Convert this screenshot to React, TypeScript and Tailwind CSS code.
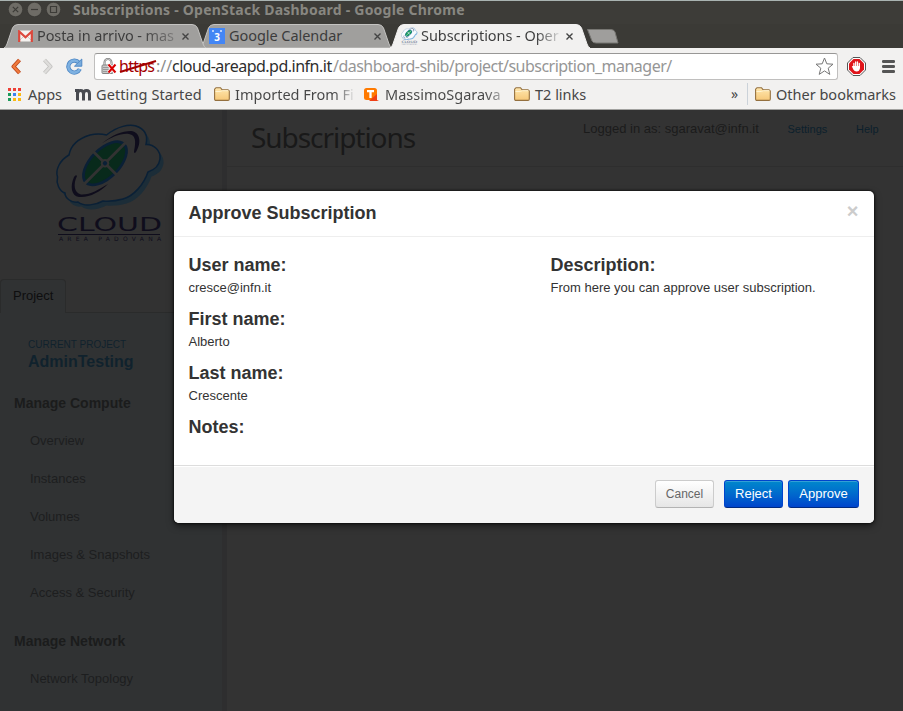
import type { ReactNode } from "react";

const UI = "font-['Noto_Sans','Open_Sans',sans-serif]";

function WindowButton({ children }: { children: ReactNode }) {
  return (
    <svg className="size-[15px] shrink-0" viewBox="0 0 15 15" fill="none" stroke="#3c3b37" strokeWidth="1.2">
      <circle cx="7.5" cy="7.5" r="7.2" fill="#6e6c66" stroke="#34332f" strokeWidth=".6" />
      {children}
    </svg>
  );
}

function TabShape({ width, fill, stroke }: { width: number; fill: string; stroke: string }) {
  const w = width;
  return (
    <svg className="absolute inset-0 size-full" viewBox={`0 0 ${w} 24`} preserveAspectRatio="none">
      <path
        d={`M0 24 Q2 23 3 20 L8.500 4 Q10 .5 14 .5 H${w - 14} Q${w - 10} .5 ${w - 8.5} 4 L${w - 3} 20 Q${w - 2} 23 ${w} 24 Z`}
        fill={fill}
        stroke={stroke}
      />
    </svg>
  );
}

function CloseX() {
  return (
    <svg className="relative size-[7px] shrink-0" viewBox="0 0 7 7" stroke="#444" strokeWidth="1.4">
      <path d="M.5 .5 6.500 6.500M6.500 .5 .5 6.500" />
    </svg>
  );
}

function Folder() {
  return (
    <svg className="h-[14px] w-4 shrink-0" viewBox="0 0 16 14">
      <defs>
        <linearGradient id="folder" x1="0" y1="0" x2="0" y2="1">
          <stop offset="0" stopColor="#ffe7b0" />
          <stop offset="1" stopColor="#f6c878" />
        </linearGradient>
      </defs>
      <path d="M.6 12V2.200L2 .7h4.500L8 2.700h6l1.300 1.200V12q0 1.400-1.300 1.400H2Q.6 13.400.6 12Z" fill="url(#folder)" stroke="#94703f" strokeWidth="1.100" />
      <path d="M1.500 4.500h5L8.200 3.700h6.200" fill="none" stroke="#fff3d0" />
    </svg>
  );
}

const CLOUD =
  "M50.500 13C62 4 73 2 80 4C89 7 92 14 90 22.500C98 22 105 29 104 37C103 44 98 48 92 50C88 62 78 74 67 77C60 79 53 79.500 47 79C40 83 28 85 22 80C15 81 9 76 9 71C3 69 0 61 1.500 55C-1 48 4 38 13 33C15 22 24 16 34 13C41 11.500 46 12 50.500 13Z";

function Logo({ className, fill, line, shade, green, ink }: {
  className: string; fill: string; line: string; shade: string; green: string; ink: string;
}) {
  return (
    <svg className={className} viewBox="0 0 110 120">
      <path d={CLOUD} transform="translate(3.500 4.500)" fill={shade} />
      <path d={CLOUD} fill={fill} stroke={line} strokeWidth="1.500" />
      <g transform="translate(49 41.300) rotate(-45)">
        <ellipse rx="28.500" ry="15.500" fill={line} />
        <ellipse rx="25.500" ry="12.800" fill={green} />
        <path d="M-30 0H30M0-17V17" stroke={fill} strokeWidth="2.800" />
        <circle r="4.200" fill={fill} />
        <circle r="2.200" fill={line} />
      </g>
      <path
        d="M46 21.300C56 13 66 9 75 9C84 10 86 20 80 30Q78 32 78 29.500C80 20 80 13 73 12C65 11 56 15 46 21.300ZM52 62C42 68 34 73 25 72.500C18 71 17 62 21 54Q20 52 18 55C14 64 15 74 23 75C33 76 44 70 52 62Z"
        fill={ink}
      />
      <g fill={ink} className="font-['DejaVu_Sans',sans-serif]">
        <text x="1" y="108.700" fontSize="20" textLength="105" lengthAdjust="spacingAndGlyphs">CLOUD</text>
        <path d="M2 112.500H104" stroke={ink} strokeWidth="1" />
        <text x="3" y="119" fontSize="6" textLength="102" lengthAdjust="spacing">AREA PADOVANA</text>
      </g>
    </svg>
  );
}

function Browser() {
  return (
    <header className={`h-[110px] ${UI} text-[15px] text-[#3c3c3c]`}>
      <div className="flex h-6 items-start gap-[4px] border-t border-[#a9b3b1] bg-[#3d3c38] pl-2">
        <div className="flex gap-[4px] pt-px">
          <WindowButton><path d="m4.800 4.800 5.400 5.400m0-5.400-5.400 5.400" /></WindowButton>
          <WindowButton><path d="M4 7.500h7" /></WindowButton>
          <WindowButton><path d="M4.500 4.500h6v6h-6z" /></WindowButton>
        </div>
        <span className="ml-[8px] whitespace-nowrap text-[14px] leading-[18px] font-bold tracking-[0.23px] text-[#888781]">
          Subscriptions - OpenStack Dashboard - Google Chrome
        </span>
      </div>

      <div className="flex h-6 bg-[#3b3a36] pl-[4px]">
        <div className="relative z-10 flex h-6 w-[202px] shrink-0 items-center pl-[14px]">
          <TabShape width={202} fill="#a09f9d" stroke="#c4c3c1" />
          <svg className="relative h-[12px] w-[15px] shrink-0" viewBox="0 0 15 12">
            <path d="M1 .5h13v11H1z" fill="#f5f2ef" />
            <path d="m1 11 5-5m8 5L9 6" stroke="#cfcac5" />
            <path d="M1.200 12V1.500l6.300 5.800 6.300-5.800V12" fill="none" stroke="#dc483c" strokeWidth="2.200" />
          </svg>
          <span className="relative ml-[4px] w-[141px] whitespace-nowrap bg-gradient-to-r from-[#3c3c3c] from-74% to-[#858483] bg-clip-text text-[14.5px] leading-[22px] pb-[2px] tracking-[-0.1px] text-transparent">Posta in arrivo - mas</span>
          <div className="ml-[4px] flex"><CloseX /></div>
        </div>
        <div className="relative -ml-[6px] flex h-6 w-[192px] shrink-0 items-center pl-[9px]">
          <TabShape width={192} fill="#a09f9d" stroke="#c4c3c1" />
          <div className="relative flex size-4 shrink-0 items-center justify-center bg-[#4386f5] text-[10px] font-bold text-white">
            <span className="pt-[3px]">3</span>
            <i className="absolute top-[2px] left-[3px] size-[2px] rounded-full bg-white/80" />
            <i className="absolute top-[2px] right-[3px] size-[2px] rounded-full bg-white/80" />
          </div>
          <span className="relative ml-[4px] w-[145px] whitespace-nowrap pb-[2px] text-[14.5px] leading-[22px] tracking-[-0.05px]">Google Calendar</span>
          <CloseX />
        </div>
        <div className="relative z-10 -ml-[2px] flex h-6 w-[200px] shrink-0 items-center pl-[11px]">
          <TabShape width={200} fill="#f2f1f0" stroke="#f2f1f0" />
          <Logo className="relative h-[18px] w-[17px] shrink-0" fill="#f8fbff" line="#2c6ea8" shade="#83bce6" green="#159a59" ink="#526582" />
          <span className="relative ml-[3px] w-[140px] whitespace-nowrap bg-gradient-to-r from-[#3c3c3c] from-82% to-[#e8e8e8] bg-clip-text pb-[2px] text-[14.5px] leading-[22px] tracking-[-0.05px] text-transparent">Subscriptions - Oper</span>
          <div className="ml-[5px] flex"><CloseX /></div>
        </div>
        <svg className="-ml-[3px] mt-[5px] h-[15px] w-[32px]" viewBox="0 0 32 15">
          <path d="M.5.5H24Q27 .5 28 3l3 11H9Q6 14 5 12Z" fill="#9f9e9c" stroke="#777672" />
        </svg>
      </div>

      <div className="flex h-9 items-center bg-[#f2f1f0] pl-[11px]">
        <svg className="h-[17px] w-[11px]" viewBox="0 0 11 17" fill="none" strokeLinejoin="round">
          <path d="M8.500 2 2.500 8.500l6 6.500" stroke="#b9431a" strokeWidth="4" />
          <path d="M8.500 2 2.500 8.500l6 6.500" stroke="#ef7a3d" strokeWidth="2.400" />
        </svg>
        <svg className="ml-[20px] h-[17px] w-[11px]" viewBox="0 0 11 17" fill="none" strokeLinejoin="round">
          <path d="m2.500 2 6 6.500-6 6.500" stroke="#c3c2c0" strokeWidth="4" />
          <path d="m2.500 2 6 6.500-6 6.500" stroke="#dedddb" strokeWidth="2.400" />
        </svg>
        <svg className="ml-[13px] size-[17px]" viewBox="0 0 17 17" fill="none">
          <path d="M13 4.800A6 6 0 1 0 13.800 11" stroke="#4f88c5" strokeWidth="4.200" />
          <path d="M13 4.800A6 6 0 1 0 13.800 11" stroke="#7eb1e1" strokeWidth="2.600" />
          <path d="M15.800 1v7.200H8.500Z" fill="#78abdc" stroke="#4f88c5" />
        </svg>
        <div className="ml-[11px] flex h-[27px] w-[744px] items-center rounded-[3px] border border-[#c0bfbe] border-t-[#989796] bg-white pl-[6px] pr-[3px]">
          <svg className="h-[17px] w-[16px] shrink-0" viewBox="0 0 16 17">
            <path d="M3.500 8V4.500a3.500 3.500 0 0 1 7 0V8" fill="none" stroke="#777" strokeWidth="2" />
            <path d="M3.500 8V4.500a3.500 3.500 0 0 1 7 0V8" fill="none" stroke="#ddd" strokeWidth=".8" />
            <rect x="1" y="7" width="11" height="8.500" rx="1" fill="#c9c9c9" stroke="#858585" />
            <path d="M2 9.500h9M2 11.500h9M2 13.500h9" stroke="#999" />
            <path d="m7.500 6.500 7 8m0-8-7 8" stroke="#fff" strokeWidth="3.500" />
            <path d="m7.500 6.500 7 8m0-8-7 8" stroke="#d90000" strokeWidth="2" />
          </svg>
          <div className="ml-[2px] flex h-[25px] w-[700px] whitespace-nowrap text-[16px] leading-[24px]">
            <span className="relative w-[37px] tracking-[-0.75px] text-[#a30000]">https
              <svg className="absolute top-[5px] left-0 h-[15px] w-[38px]" viewBox="0 0 38 15"><path d="M1 13 37 2" stroke="#a30000" strokeWidth="2" /></svg>
            </span>
            <span className="w-[16px] text-[#8c8c8c]">://</span>
            <span className="w-[161px] tracking-[-0.5px] text-[#2e2e2e]">cloud-areapd.pd.infn.it</span>
            <span className="tracking-[-0.52px] text-[#969696]">/dashboard-shib/project/subscription_manager/</span>
          </div>
          <svg className="-ml-[1px] size-[19px] shrink-0" viewBox="0 0 19 19">
            <path d="m9.500 1 2.300 5.800 6.200.4-4.800 4 1.600 6.200-5.300-3.500-5.300 3.500 1.600-6.200-4.800-4 6.200-.4Z" fill="#fff" stroke="#777" />
          </svg>
        </div>
        <svg className="ml-[9px] size-[19px] shrink-0" viewBox="0 0 19 19">
          <path d="M6 .5h7L18.500 6v7L13 18.500H6L.5 13V6Z" fill="#fff" stroke="#555" />
          <path d="M6.500 2h6L17 6.500v6L12.500 17h-6L2 12.500v-6Z" fill="#e0141a" />
          <path d="M6.900 6.500v4M8.700 5v4M10.500 5v4M12.300 6.500v4" stroke="#fff" strokeWidth="1.300" strokeLinecap="round" />
          <path d="M4.800 9.200 6.200 9h6.800v2q-.5 3.500-3.500 3.500-2 0-3.200-2Z" fill="#fff" />
        </svg>
        <svg className="ml-[16px] h-[13px] w-[13px] shrink-0" viewBox="0 0 13 13"><path d="M1.200 1.500h10.600M1.200 6.500h10.600M1.200 11.500h10.600" stroke="#555" strokeWidth="2.800" strokeLinecap="round" /></svg>
      </div>

      <div className="flex h-[26px] items-center whitespace-nowrap border-b border-[#a2a2a0] bg-[#f2f1f0] pb-[5px] pl-2 text-[14.5px] leading-[20px] text-[#464646]">
        <div className="mt-px grid grid-cols-3 gap-[2px]">
          {["bg-[#ee4036]", "bg-[#ee4036]", "bg-[#ee4036]", "bg-[#1c9b5b]", "bg-[#3a80f0]", "bg-[#fbb912]", "bg-[#1c9b5b]", "bg-[#fbb912]", "bg-[#fbb912]"].map((c, i) => (
            <i key={i} className={`size-[3px] ${c}`} />
          ))}
        </div>
        <span className="ml-[7px] w-[47px]">Apps</span>
        <svg className="mt-px h-[12px] w-[16px]" viewBox="0 0 16 12" fill="none" stroke="#484a50" strokeWidth="3">
          <path d="M0 1.500h2.500v10M2.500 5q0-3.500 3-3.500T8.500 5v6.500M8.500 5q0-3.500 3-3.500t3 3.500v6.500" />
        </svg>
        <span className="ml-[5px] w-[118px] tracking-[0.1px]">Getting Started</span>
        <Folder />
        <span className="ml-[5px] w-[119px] bg-gradient-to-r from-[#464646] from-84% to-[#e4e4e4] bg-clip-text text-transparent">Imported From Fi</span>
        <svg className="ml-[10px] mt-px h-[13px] w-[15px]" viewBox="0 0 15 13">
          <rect width="13" height="12" rx="2.500" fill="#ff7a00" />
          <path d="M13 6v6l2 1H5Z" fill="#f04016" />
          <path d="M3 3.200h7M6.500 3v7" stroke="#fff" strokeWidth="2.300" />
        </svg>
        <span className="ml-[6px] w-[118px] bg-gradient-to-r from-[#464646] from-85% to-[#bbb] bg-clip-text text-transparent">MassimoSgarava</span>
        <div className="ml-[11px] flex"><Folder /></div>
        <span className="ml-[5px] w-[196px]">T2 links</span>
        <span className="w-[16px] text-[14px]">»</span>
        <i className="h-[22px] w-px bg-[#cbd2d9]" />
        <div className="ml-[7px] flex"><Folder /></div>
        <span className="ml-[5px]">Other bookmarks</span>
      </div>
    </header>
  );
}

function NavGroup({ title, items }: { title: string; items: string[] }) {
  return (
    <section>
      <h4 className="h-[38px] pl-[14px] text-[14px] leading-[38px] font-bold text-[#1b1c1c]">{title}</h4>
      {items.map((item) => (
        <div key={item} className="h-[38px] pl-[30px] text-[13px] leading-[38px] text-[#1d1e1f]">{item}</div>
      ))}
    </section>
  );
}

function Field({ label, value }: { label: string; value?: string }) {
  return (
    <div className="mb-[9px]">
      <h3 className="text-[18px] leading-[27px] font-bold">{label}</h3>
      {value && <p className="leading-[18px]">{value}</p>}
    </div>
  );
}

const PRIMARY =
  "h-7 rounded-[3px] border border-[#0044cc] border-b-[#002a80] bg-gradient-to-b from-[#0088cc] to-[#0044cc] pb-px text-[13px] leading-[24px] text-white shadow-[inset_0_1px_0_rgba(255,255,255,.2)]";

export default function App() {
  return (
    <div className="relative h-[711px] w-[903px] overflow-hidden bg-[#333] font-['Liberation_Sans',Arial,sans-serif] text-[13px]">
      <Browser />
      <div className="flex h-[601px]">
        <aside className="w-[227px] shrink-0 border-r-[5px] border-[#2e2e2f] bg-[#303233]">
          <div className="h-[203px] bg-[#323232]">
            <div className="h-[169px] pt-[12px] pl-[56px]">
              <Logo className="h-[120px] w-[110px] overflow-visible" fill="#323232" line="#0a2036" shade="#1c2d38" green="#082a1b" ink="#0f0d1c" />
            </div>
            <div className="flex h-[34px]">
              <div className="w-[66px] rounded-t-[4px] border border-b-0 border-[#2a2b2b] bg-[#303233] pl-[12px] leading-[31px] text-[#0e0e0f]">Project</div>
              <div className="flex-1 border-b border-[#2a2b2b]" />
            </div>
          </div>
          <div className="pt-[25px] pl-[28px] text-[#10222d]">
            <div className="text-[10px] leading-[14px]">CURRENT PROJECT</div>
            <div className="text-[16px] leading-[20px] font-bold">AdminTesting</div>
          </div>
          <div className="pt-[12px]">
            <NavGroup title="Manage Compute" items={["Overview", "Instances", "Volumes", "Images & Snapshots", "Access & Security"]} />
            <div className="h-[10px]" />
            <NavGroup title="Manage Network" items={["Network Topology"]} />
          </div>
        </aside>
        <main className="flex-1">
          <div className="flex h-[57px] border-b border-[#2e2e2e] pl-[24px]">
            <h1 className={`w-[332px] ${UI} pt-[7px] text-[28px] leading-[40px] tracking-[-1.05px] text-[#191919]`}>Subscriptions</h1>
            <span className="w-[204.5px] pt-[9px] leading-[20px] text-[#1b1b1b]">Logged in as: sgaravat@infn.it</span>
            <span className="w-[68.5px] pt-[9px] text-[11px] leading-[20px] text-[#0c202c]">Settings</span>
            <span className="pt-[9px] text-[11px] leading-[20px] text-[#0c202c]">Help</span>
          </div>
        </main>
      </div>

      <div className="absolute top-[191px] left-[174px] flex h-[332px] w-[700px] flex-col overflow-hidden rounded-[5px] bg-white text-[#333] shadow-[0_3px_7px_rgba(0,0,0,.5),0_0_2px_1px_rgba(0,0,0,.5)]">
        <div className="flex h-[46px] justify-between border-b border-[#eee] pr-[15.5px] pl-[14.5px]">
          <h2 className="text-[18px] leading-[45px] font-bold">Approve Subscription</h2>
          <span className="text-[20px] leading-[40px] font-bold text-[#ccc]">×</span>
        </div>
        <div className="flex h-[228px] pt-[15px] pl-[14.5px]">
          <div className="w-[361px]">
            <Field label="User name:" value="cresce@infn.it" />
            <Field label="First name:" value="Alberto" />
            <Field label="Last name:" value="Crescente" />
            <Field label="Notes:" />
          </div>
          <div className="pl-px"><Field label="Description:" value="From here you can approve user subscription." /></div>
        </div>
        <div className="flex h-[58px] justify-end border-t border-[#ddd] bg-[#f4f4f4] pt-[14px] pr-[15px] shadow-[inset_0_1px_0_#fff]">
          <button className="mr-[10px] h-7 w-[59px] rounded-[3px] border border-[#ccc] border-b-[#b3b3b3] bg-gradient-to-b from-white to-[#e6e6e6] text-[12px] leading-[25px] text-[#666]">Cancel</button>
          <button className={`mr-[5px] w-[59px] ${PRIMARY}`}>Reject</button>
          <button className={`w-[71px] ${PRIMARY}`}>Approve</button>
        </div>
      </div>
    </div>
  );
}
